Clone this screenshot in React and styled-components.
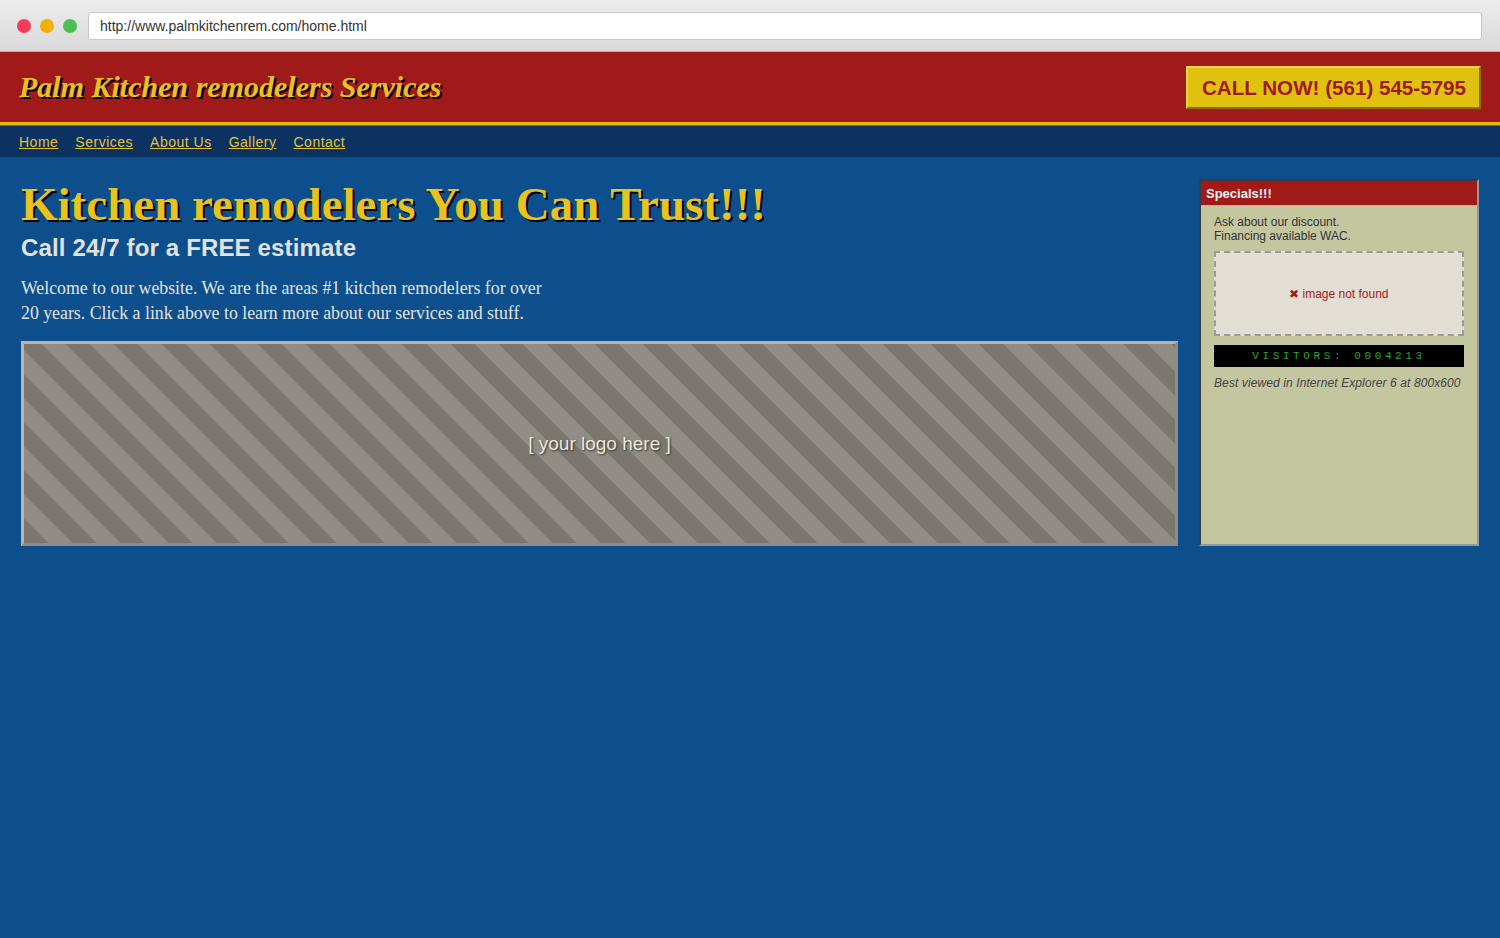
import styled, { createGlobalStyle } from 'styled-components';

const GlobalStyle = createGlobalStyle`
  html, body {
    margin: 0;
    padding: 0;
    background: #0c4f8c;
  }
  body {
    font-family: "Liberation Sans", Arial, sans-serif;
    min-height: 938px;
  }
`;

const Chrome = styled.div`
  height: 51px;
  display: flex;
  align-items: center;
  padding: 0 18px 0 17px;
  background: linear-gradient(#ececec, #d9d9d9);
  border-bottom: 1px solid #b4b4b4;
`;

const Dots = styled.div`
  display: flex;
  gap: 9px;
  margin-right: 11px;
`;

const Dot = styled.span`
  width: 14px;
  height: 14px;
  border-radius: 50%;
  background: ${(p) => p.color};
`;

const UrlBar = styled.div`
  flex: 1;
  height: 26px;
  display: flex;
  align-items: center;
  padding-left: 11px;
  background: #fff;
  border: 1px solid #c9c9c9;
  border-radius: 3px;
  font-size: 14px;
  color: #333;
`;

const Header = styled.header`
  height: 70px;
  display: flex;
  align-items: center;
  justify-content: space-between;
  padding: 0 19px;
  background: #a01a1a;
  border-bottom: 3px solid #e0b818;
  box-shadow: 0 1px 0 #8a6a10;
`;

const SiteTitle = styled.h1`
  margin: 0;
  font-family: "Liberation Serif", "Times New Roman", serif;
  font-style: italic;
  font-weight: bold;
  font-size: 30px;
  color: #e8c21e;
  text-shadow: 2px 2px 0 #000;
`;

const CallButton = styled.div`
  padding: 8px 13px 8px 14px;
  background: #e1c10f;
  border: 2px solid;
  border-color: #f0d850 #8a6c00 #8a6c00 #f0d850;
  color: #a01a1a;
  font-weight: bold;
  font-size: 20.6px;
  line-height: 23px;
`;

const Nav = styled.nav`
  height: 31px;
  display: flex;
  align-items: center;
  gap: 17px;
  padding: 0 19px;
  margin-top: 1px;
  background: #0b3260;
`;

const NavLink = styled.a`
  color: #e2c23a;
  font-size: 14px;
  letter-spacing: 0.5px;
  text-decoration: underline;
  cursor: pointer;
`;

const Page = styled.div`
  display: grid;
  grid-template-columns: 1fr 280px;
  gap: 21px;
  padding: 22px 21px 0;
`;

const Main = styled.main`
  display: flex;
  flex-direction: column;
  padding-top: 1px;
`;

const Headline = styled.h2`
  margin: 0;
  font-family: "Liberation Serif", "Times New Roman", serif;
  font-weight: bold;
  font-size: 47px;
  line-height: 48px;
  color: #e8c21e;
  text-shadow: 2px 2px 0 #000;
`;

const SubHead = styled.h3`
  margin: 6px 0 0;
  font-size: 24px;
  letter-spacing: 0.15px;
  line-height: 28px;
  color: #e2e2e2;
`;

const Intro = styled.p`
  margin: 14px 0 0;
  max-width: 540px;
  font-family: "Liberation Serif", "Times New Roman", serif;
  font-size: 17.8px;
  line-height: 25px;
  color: #e4e4e4;
`;

const LogoBox = styled.div`
  height: 199px;
  margin-top: 15px;
  display: flex;
  align-items: center;
  justify-content: center;
  border: 3px solid;
  border-color: #b4b4b4 #8c8c8c #8c8c8c #b4b4b4;
  background: repeating-linear-gradient(
    45deg,
    #7b776f 0 17px,
    #918d84 17px 34px
  );
  color: #ebe7dc;
  font-size: 19px;
  text-shadow: 1px 1px 2px #333;
`;

const Sidebar = styled.aside`
  display: flex;
  flex-direction: column;
  background: #c4c6a0;
  border: 2px solid;
  border-color: #3c3c3c #8e9aa0 #8e9aa0 #3c3c3c;
`;

const SideHead = styled.div`
  height: 24px;
  display: flex;
  align-items: center;
  padding: 0 5px;
  background: #a11a1a;
  border-bottom: 1px solid #c8b080;
  color: #f4f4f4;
  font-weight: bold;
  font-size: 13px;
`;

const SideBody = styled.div`
  padding: 9px 13px;
  font-size: 12px;
  line-height: 14px;
  color: #333;
`;

const Placeholder = styled.div`
  height: 81px;
  margin-top: 8px;
  display: flex;
  align-items: center;
  justify-content: center;
  gap: 3px;
  background: #e3ded4;
  border: 2px dashed #9a9a9a;
  color: #a81a1a;
`;

const Counter = styled.div`
  height: 22px;
  margin-top: 9px;
  display: flex;
  align-items: center;
  justify-content: center;
  background: #000;
  color: #2ea82e;
  font-family: "Liberation Mono", "Courier New", monospace;
  font-size: 11px;
  letter-spacing: 3.6px;
`;

const Note = styled.p`
  margin: 9px 0 0;
  font-style: italic;
  letter-spacing: 0.1px;
  color: #444;
`;

const links = ['Home', 'Services', 'About Us', 'Gallery', 'Contact'];

export default function App() {
  return (
    <>
      <GlobalStyle />
      <Chrome>
        <Dots>
          <Dot color="#f23c5a" />
          <Dot color="#f2b000" />
          <Dot color="#4cbf50" />
        </Dots>
        <UrlBar>http://www.palmkitchenrem.com/home.html</UrlBar>
      </Chrome>
      <Header>
        <SiteTitle>Palm Kitchen remodelers Services</SiteTitle>
        <CallButton>CALL NOW! (561) 545-5795</CallButton>
      </Header>
      <Nav>
        {links.map((l) => (
          <NavLink key={l}>{l}</NavLink>
        ))}
      </Nav>
      <Page>
        <Main>
          <Headline>Kitchen remodelers You Can Trust!!!</Headline>
          <SubHead>Call 24/7 for a FREE estimate</SubHead>
          <Intro>
            Welcome to our website. We are the areas #1 kitchen remodelers for over
            20 years. Click a link above to learn more about our services and stuff.
          </Intro>
          <LogoBox>[ your logo here ]</LogoBox>
        </Main>
        <Sidebar>
          <SideHead>Specials!!!</SideHead>
          <SideBody>
            Ask about our discount.
            <br />
            Financing available WAC.
            <Placeholder>
              <span>✖</span> image not found
            </Placeholder>
            <Counter>VISITORS: 0004213</Counter>
            <Note>Best viewed in Internet Explorer 6 at 800x600</Note>
          </SideBody>
        </Sidebar>
      </Page>
    </>
  );
}
